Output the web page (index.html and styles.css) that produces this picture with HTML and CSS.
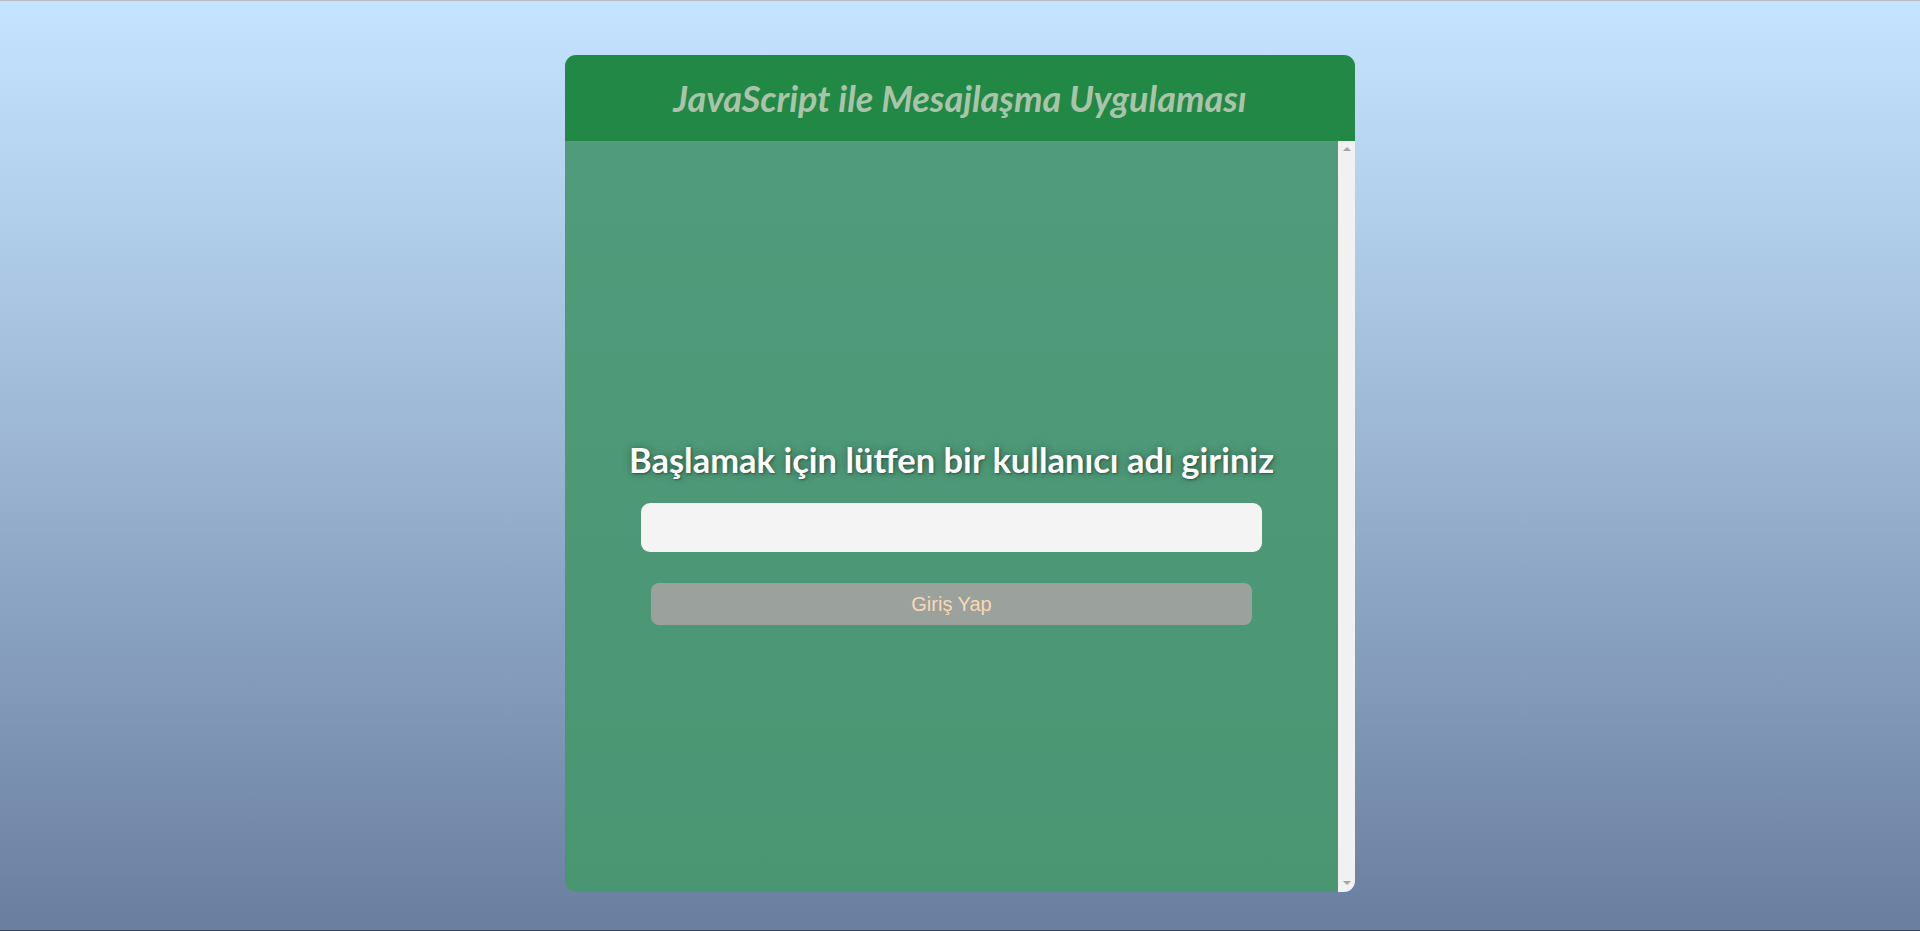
FILE: index.html
```html
<!DOCTYPE html>
<html lang="tr">
<head>
<meta charset="utf-8">
<title>JavaScript ile Mesajlaşma Uygulaması</title>
<link rel="stylesheet" href="styles.css">
</head>
<body>
<div class="page">
  <main class="card">
    <header class="card-header">
      <h1 class="title">JavaScript ile Mesajlaşma Uygulaması</h1>
    </header>
    <div class="card-main">
      <section class="card-body">
        <div class="login">
          <h2 class="login-title">Başlamak için lütfen bir kullanıcı adı giriniz</h2>
          <input class="login-input" type="text">
          <button class="login-btn" type="button">Giriş Yap</button>
        </div>
      </section>
      <div class="scroll-rail" aria-hidden="true">
        <span class="arrow arrow-up"></span>
        <span class="arrow arrow-down"></span>
      </div>
    </div>
  </main>
</div>
</body>
</html>
```

FILE: styles.css
```css
html, body {
  margin: 0;
  padding: 0;
  height: 100%;
}

body {
  background: linear-gradient(to bottom, #c5e4ff 0%, #a3bedb 40%, #6a7ea0 100%);
  font-family: "Lato", "Liberation Sans", sans-serif;
  overflow: hidden;
}

.page {
  box-sizing: border-box;
  height: 931px;
  border-top: 1px solid #b8bcc2;
  border-bottom: 1px solid #3d4250;
  padding-top: 54px;
  display: flex;
  justify-content: center;
  align-items: flex-start;
}

.card {
  width: 790px;
  height: 837px;
  border-radius: 11px;
  overflow: hidden;
  display: flex;
  flex-direction: column;
}

.card-header {
  height: 86px;
  flex: none;
  background: #218845;
  display: flex;
  align-items: center;
  justify-content: center;
}

.title {
  margin: 0;
  font-family: "Lato", "Liberation Sans", sans-serif;
  font-style: italic;
  font-weight: 700;
  font-size: 36px;
  line-height: 40px;
  color: #aac4aa;
}

.card-main {
  flex: 1;
  display: flex;
  min-height: 0;
}

.card-body {
  flex: 1;
  overflow: hidden;
  background: linear-gradient(to bottom, #4f9b7b 0%, #4a9673 100%);
}

.scroll-rail {
  width: 17px;
  flex: none;
  background: #f1f1f1;
  display: flex;
  flex-direction: column;
  justify-content: space-between;
  align-items: center;
  padding: 6px 0 7px;
  box-sizing: border-box;
}

.arrow {
  width: 0;
  height: 0;
  border-left: 4px solid transparent;
  border-right: 4px solid transparent;
}

.arrow-up {
  border-bottom: 4px solid #a3a3a3;
}

.arrow-down {
  border-top: 4px solid #a3a3a3;
}

.login {
  padding-top: 299px;
  display: flex;
  flex-direction: column;
  align-items: center;
}

.login-title {
  margin: 0 0 23px;
  font-size: 34.5px;
  line-height: 40px;
  font-weight: 700;
  color: #ffffff;
  text-shadow: 1px 1px 2px rgba(0, 0, 0, 0.35), 0 0 8px rgba(0, 0, 0, 0.35);
}

.login-input {
  box-sizing: border-box;
  width: 621px;
  height: 49px;
  border: none;
  border-radius: 9px;
  background: #f4f4f4;
  outline: none;
  padding: 0 12px;
  font-size: 18px;
}

.login-btn {
  margin-top: 31px;
  width: 601px;
  height: 42px;
  border: none;
  border-radius: 8px;
  background: #9ba29e;
  color: #fcd8b2;
  font-family: "Liberation Sans", Arial, sans-serif;
  font-size: 20px;
  padding: 0;
}
```
